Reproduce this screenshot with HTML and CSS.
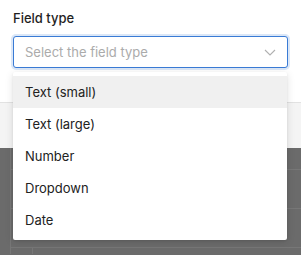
FILE: index.html
```html
<!DOCTYPE html>
<html lang="en">

<head>
    <meta charset="UTF-8">
    <meta name="viewport" content="width=device-width, initial-scale=1.0">
    <title>Field type</title>
    <link rel="stylesheet" href="styles.css">
</head>

<body>
    <div class="modal">
        <div class="modal-body">
            <label class="field-label" for="fieldType">Field type</label>
            <div class="select" id="fieldType">
                <span class="placeholder">Select the field type</span>
                <svg class="chevron" width="12" height="7" viewBox="0 0 12 7">
                    <path d="M1 1 L6 6 L11 1" fill="none" stroke="#b0b0b0" stroke-width="1.1" />
                </svg>
            </div>
        </div>
        <div class="modal-footer"></div>
    </div>
    <div class="backdrop">
        <div class="table-row first"></div>
        <div class="table-row"></div>
        <div class="table-row"></div>
        <div class="table-row last"></div>
    </div>

    <ul class="menu">
        <li class="menu-item active">Text (small)</li>
        <li class="menu-item">Text (large)</li>
        <li class="menu-item">Number</li>
        <li class="menu-item">Dropdown</li>
        <li class="menu-item">Date</li>
    </ul>
</body>

</html>
```

FILE: styles.css
```css
body {
    margin: 0;
    padding: 0;
    font-family: Inter, "Noto Sans", sans-serif;
    font-size: 13px;
    color: #222;
    background: #6b6b6b;
    overflow: hidden;
}

.modal {
    background: #fff;
}

.modal-body {
    padding: 10px 13px 34px 13px;
    border-bottom: 1px solid #e2e2e2;
}

.field-label {
    display: block;
    line-height: 16px;
    margin-bottom: 10px;
    font-weight: 500;
    color: #1f1f1f;
}

.select {
    height: 30px;
    border: 1px solid #3a7bd5;
    border-radius: 3px;
    box-shadow: 0 0 0 2px rgba(58, 123, 213, 0.18);
    display: flex;
    align-items: center;
    justify-content: space-between;
    padding: 0 11px 0 11px;
    background: #fff;
}

.placeholder {
    color: #ababab;
}

.chevron {
    display: block;
}

.modal-footer {
    height: 45px;
    background: #f4f4f4;
}

.backdrop {
    background: #6b6b6b;
    border-left: 1px solid #777;
    margin-left: 10px;
}

.table-row {
    height: 38px;
    border-bottom: 1px solid #777;
}

.table-row.first {
    height: 21px;
}

.table-row.last {
    height: 6px;
    border-bottom: none;
    border-left: 1px solid #777;
    margin-left: 21px;
}

.menu {
    position: absolute;
    top: 72px;
    left: 13px;
    width: 274px;
    margin: 0;
    padding: 4px 0;
    list-style: none;
    background: #fff;
    border-radius: 2px;
    box-shadow: 0 2px 8px rgba(0, 0, 0, 0.12), 0 1px 2px rgba(0, 0, 0, 0.08);
}

.menu-item {
    height: 32px;
    line-height: 32px;
    padding-left: 12px;
    color: #222;
}

.menu-item.active {
    background: #f0f0f0;
}
```
